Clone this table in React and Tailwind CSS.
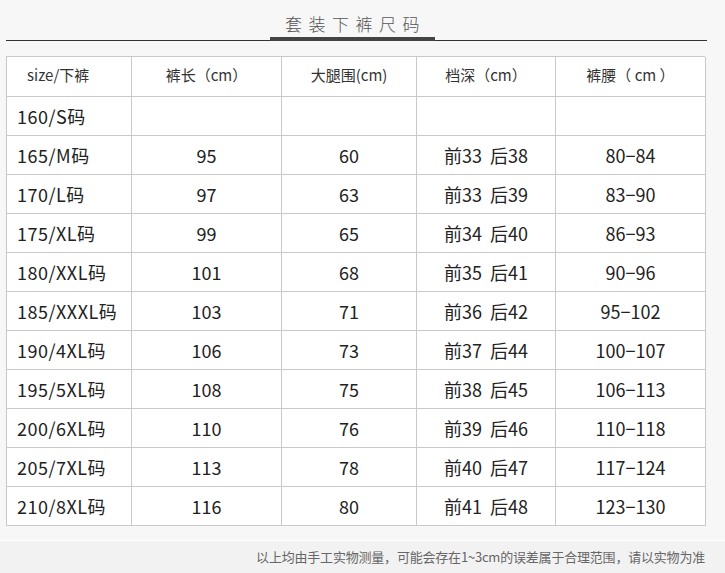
const FONT = "font-['Noto_Sans_CJK_SC','Noto_Sans',sans-serif]";

const HEAD = ["size/下裤", "裤长（cm）", "大腿围(cm)", "档深（cm）", "裤腰（ cm ）"];

const ROWS = [
  ["160/S码", "", "", "", ""],
  ["165/M码", "95", "60", "前33 后38", "80−84"],
  ["170/L码", "97", "63", "前33 后39", "83−90"],
  ["175/XL码", "99", "65", "前34 后40", "86−93"],
  ["180/XXL码", "101", "68", "前35 后41", "90−96"],
  ["185/XXXL码", "103", "71", "前36 后42", "95−102"],
  ["190/4XL码", "106", "73", "前37 后44", "100−107"],
  ["195/5XL码", "108", "75", "前38 后45", "106−113"],
  ["200/6XL码", "110", "76", "前39 后46", "110−118"],
  ["205/7XL码", "113", "78", "前40 后47", "117−124"],
  ["210/8XL码", "116", "80", "前41 后48", "123−130"],
];

const COLS = "grid grid-cols-[125px_150px_135px_139px_150px]";

export default function App() {
  return (
    <div className={`w-[725px] h-[573px] bg-[#f7f7f7] flex flex-col ${FONT}`}>
      {/* Title */}
      <div className="h-[36px] flex items-end">
        <h1 className="ml-[285px] text-[17px] leading-none tracking-[6.5px] pb-[4px] text-[#555] font-light">
          套装下裤尺码
        </h1>
      </div>
      <div className="ml-[6px] w-[701px] h-[5px] flex items-end">
        <div className="w-[264px] h-px bg-[#333]" />
        <div className="w-[165px] h-[4px] bg-[#444]" />
        <div className="flex-1 h-px bg-[#333]" />
      </div>

      {/* Table */}
      <div className="ml-[6px] mt-[15px] w-[699px] bg-white border-l border-t border-[#c9c9c9]">
        <div className={`${COLS} h-[40px]`}>
          {HEAD.map((h, i) => (
            <div
              key={i}
              className={`border-r border-b border-[#c9c9c9] flex items-center pb-[2px] text-[15px] text-[#333] ${
                i === 0 ? "pl-[20px]" : "justify-center"
              }`}
            >
              {h}
            </div>
          ))}
        </div>
        {ROWS.map((r, ri) => (
          <div key={ri} className={`${COLS} h-[39px]`}>
            {r.map((c, i) => (
              <div
                key={i}
                className={`border-r border-b border-[#c9c9c9] flex items-center text-[18px] text-[#222] whitespace-pre ${
                  i === 0 ? "pl-[10px] tracking-[0.5px]" : "justify-center"
                }`}
              >
                {i === 3 && c ? c.replace(" ", "  ") : c}
              </div>
            ))}
          </div>
        ))}
      </div>

      {/* Note */}
      <div className="mt-[14px] h-px bg-white" />
      <div className="flex-1 bg-[#f2f2f2] flex items-center justify-end pr-[20px]">
        <p className="text-[13px] text-[#666] tracking-[-0.2px]">
          以上均由手工实物测量，可能会存在1~3cm的误差属于合理范围，请以实物为准
        </p>
      </div>
    </div>
  );
}
